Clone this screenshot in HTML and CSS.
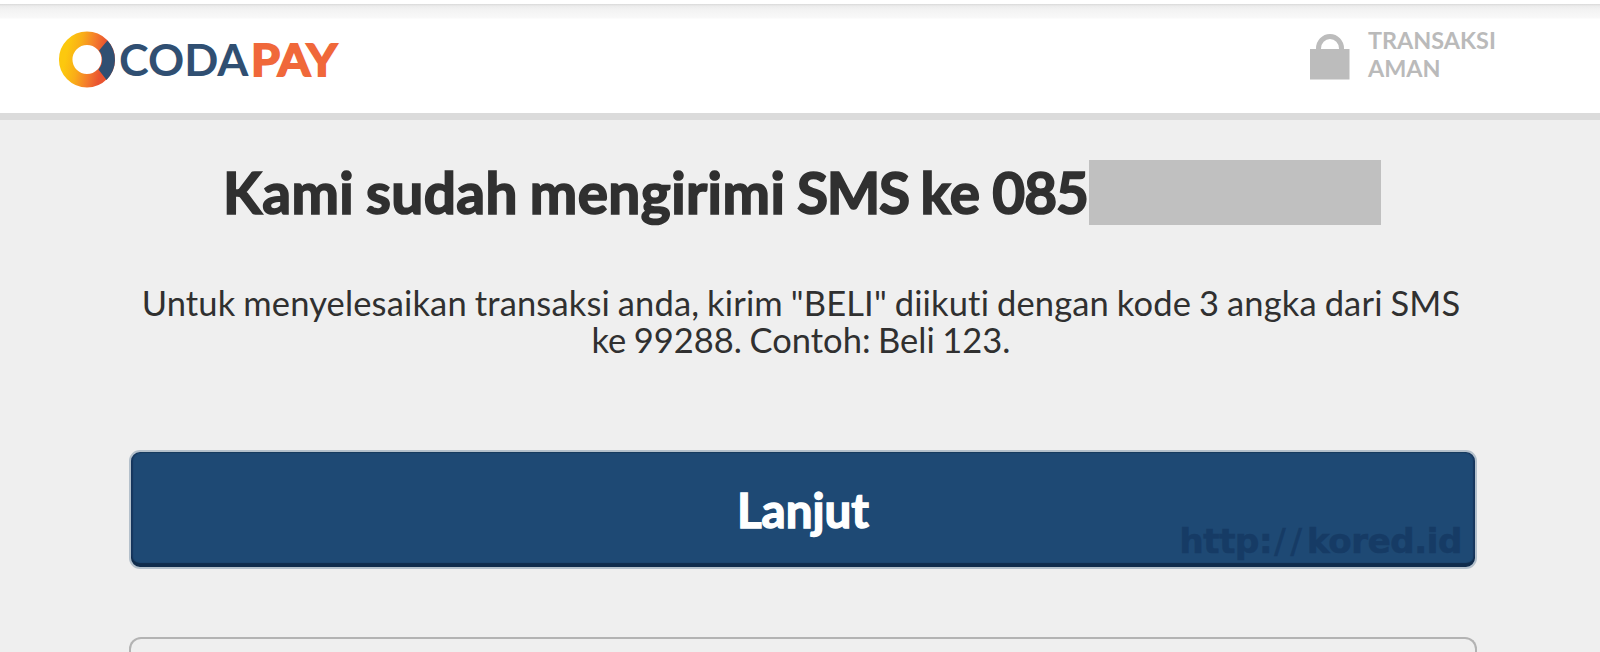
FILE: index.html
```html
<!DOCTYPE html>
<html lang="id">
<head>
<meta charset="utf-8">
<title>Codapay</title>
<link rel="stylesheet" href="styles.css">
</head>
<body>
<header class="topbar">
  <svg class="logo" width="284" height="64" viewBox="56 28 284 64" role="img" aria-label="Codapay">
    <defs>
      <linearGradient id="ring" x1="0" y1="0.4" x2="1" y2="0.6">
        <stop offset="0" stop-color="#fcc80e"/>
        <stop offset="0.3" stop-color="#f9ad18"/>
        <stop offset="0.6" stop-color="#f47b2c"/>
        <stop offset="0.85" stop-color="#e95430"/>
      </linearGradient>
    </defs>
    <circle cx="87" cy="59.500" r="21.300" fill="none" stroke="url(#ring)" stroke-width="13.500"/>
    <path d="M107.500 40.500A28.500 28.500 0 0 1 106.500 80L98.500 69.500A14.800 14.800 0 0 0 99 50.500Z" fill="#304f72"/>
    <text class="logo-coda" x="119" y="75.500" textLength="129.500" lengthAdjust="spacingAndGlyphs">CODA</text>
    <text class="logo-pay" x="251" y="75.500" textLength="86" lengthAdjust="spacingAndGlyphs">PAY</text>
  </svg>
  <div class="secure">
    <svg width="42" height="48" viewBox="0 0 42 48" aria-hidden="true">
      <path d="M9.500 18V15.500a11.500 12 0 0 1 23 0v3" fill="none" stroke="#bcbcbc" stroke-width="5"/>
      <rect x="1" y="16" width="39.500" height="30.500" fill="#bcbcbc"/>
    </svg>
    <span class="secure-text">TRANSAKSI<br>AMAN</span>
  </div>
</header>
<main class="content">
  <h1 class="title"><span class="title-text">Kami sudah mengirimi <span class="caps">SMS</span> ke <span class="digits">085</span></span><span class="mask"></span></h1>
  <p class="message">Untuk menyelesaikan transaksi anda, kirim "BELI" diikuti dengan kode 3 angka dari SMS<br><span class="example">ke 99288. Contoh: Beli 123.</span></p>
  <button class="next">Lanjut<span class="watermark">http:<span class="slashes">//</span>kored.id</span></button>
  <div class="panel"></div>
</main>
</body>
</html>
```
FILE: styles.css
```css
* { box-sizing: border-box; }
html, body { margin: 0; height: 652px; }
body {
  background: #efefef;
  color: #303030;
  font-family: Lato, "Liberation Sans", sans-serif;
  font-variant-ligatures: none;
}
.topbar {
  display: flex;
  justify-content: space-between;
  align-items: flex-start;
  height: 120px;
  padding: 28px 107px 0 56px;
  border-bottom: 7px solid #dbdbdb;
  background: linear-gradient(#fff 4px, #d9d9d9 4px, #ececec 6px, #f3f3f3 10px, #f9f9f9 18px, #fff 19px);
}
.logo { display: block; }
.logo-coda, .logo-pay { font-size: 44.500px; font-weight: 700; }
.logo-coda { fill: #304f72; }
.logo-pay { fill: #f0683a; stroke: #f0683a; stroke-width: 1.800px; }
.secure { display: flex; gap: 17px; padding-top: 5px; }
.secure svg { display: block; }
.secure-text {
  width: 125px;
  margin-top: -6px;
  color: #bababa;
  font-size: 23.400px;
  font-weight: 700;
  line-height: 27.500px;
  white-space: nowrap;
}
.content { padding: 40px 123px 0 129px; }
.title {
  display: flex;
  align-items: flex-start;
  height: 65px;
  margin: 0 0 0 94px;
  font-size: 56.700px;
  font-weight: 700;
  line-height: 65px;
  white-space: nowrap;
  -webkit-text-stroke: 1.700px #303030;
}
.title-text { width: 866px; word-spacing: -2.500px; letter-spacing: 0.450px; }
.caps { letter-spacing: -1.300px; }
.digits { letter-spacing: -1px; }
.mask { width: 292px; height: 65px; background: #c0c0c0; }
.message {
  margin: 60px 4px 0 0;
  font-size: 34.500px;
  line-height: 36.700px;
  text-align: center;
  white-space: nowrap;
  word-spacing: -1.100px;
  letter-spacing: 0.150px;
}
.example { letter-spacing: 0; word-spacing: -1.300px; }
.next {
  position: relative;
  display: block;
  width: 1348px;
  height: 119px;
  margin: 92px 0 0;
  padding: 0;
  border: 2px solid #b4c0cb;
  border-radius: 11px;
  background: #1e4974;
  box-shadow: inset 0 -4px 1px #102c4c, inset 2px 0 1px #17375f, inset -2px 0 1px #17375f, inset 0 1px 1px #183e60;
  color: #fff;
  font: 700 47.500px/60px Lato, sans-serif;
  -webkit-text-stroke: 1.400px #fff;
}
.watermark {
  position: absolute;
  right: 13px;
  bottom: -4px;
  color: #163b65;
  font: 700 34px/60px "DejaVu Sans", sans-serif;
  letter-spacing: -0.400px;
  -webkit-text-stroke: 0.600px #163b65;
}
.slashes { margin-left: 2px; font-weight: 400; letter-spacing: 5px; }
.panel {
  width: 1348px;
  height: 15px;
  margin-top: 68px;
  border: 2px solid #b3b3b3;
  border-bottom: 0;
  border-radius: 12px 12px 0 0;
}
```
